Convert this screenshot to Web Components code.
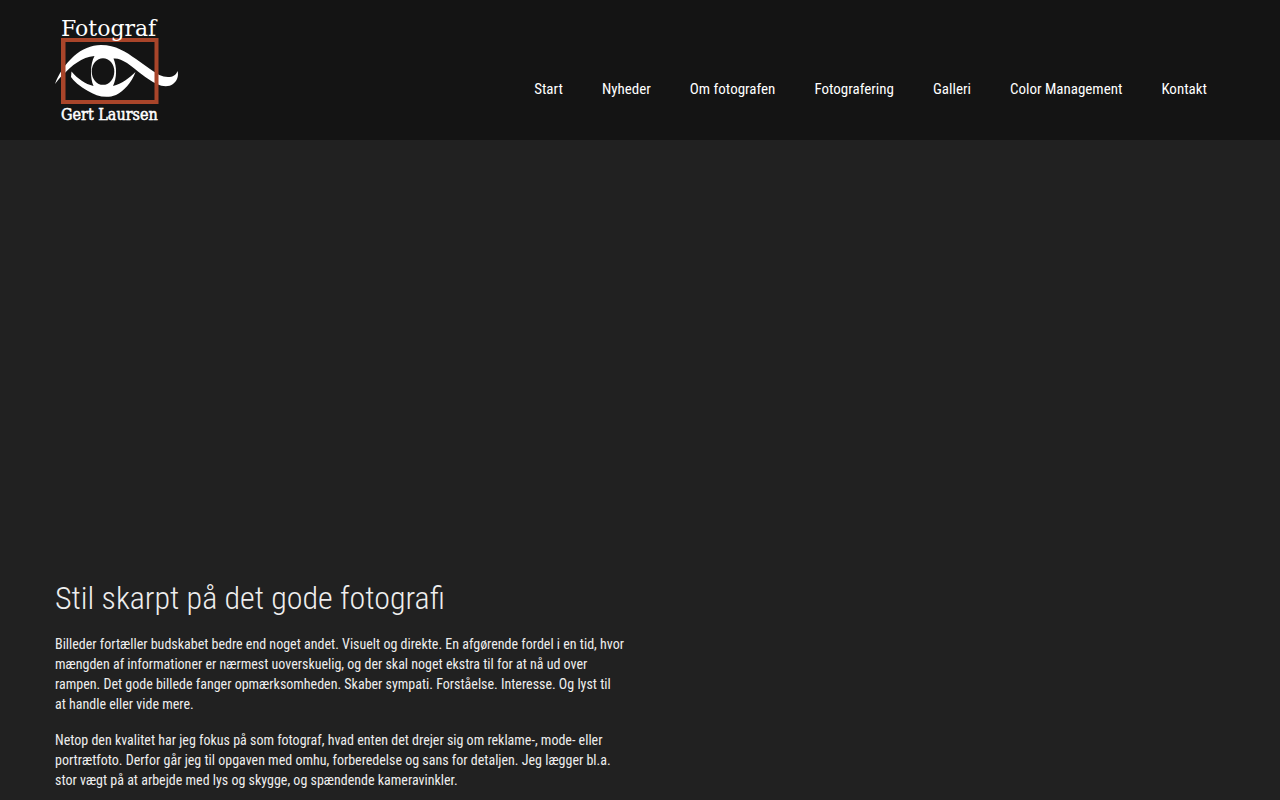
<!DOCTYPE html>
<html lang="da">
<head>
<meta charset="utf-8">
<meta name="viewport" content="width=device-width, initial-scale=1">
<title>Fotograf Gert Laursen</title>
<style>
  body { margin: 0; background: #212121; color: #eee; font-family: "Roboto Condensed", Roboto, sans-serif; }
</style>
</head>
<body>
<site-header>
  <site-logo slot="logo"></site-logo>
  <site-nav>
    <nav-link href="#start">Start</nav-link>
    <nav-link href="#nyheder">Nyheder</nav-link>
    <nav-link href="#om">Om fotografen</nav-link>
    <nav-link href="#fotografering">Fotografering</nav-link>
    <nav-link href="#galleri">Galleri</nav-link>
    <nav-link href="#color">Color Management</nav-link>
    <nav-link href="#kontakt">Kontakt</nav-link>
  </site-nav>
</site-header>
<main>
  <hero-stage></hero-stage>
  <intro-article>
    <span slot="title">Stil skarpt på det gode fotografi</span>
    <text-block>Billeder fortæller budskabet bedre end noget andet. Visuelt og direkte. En afgørende fordel i en tid, hvor mængden af informationer er nærmest uoverskuelig, og der skal noget ekstra til for at nå ud over rampen. Det gode billede fanger opmærksomheden. Skaber sympati. Forståelse. Interesse. Og lyst til at&nbsp;handle eller vide mere.</text-block>
    <text-block>Netop den kvalitet har jeg fokus på som fotograf, hvad enten det drejer sig om reklame-, mode- eller portrætfoto. Derfor går jeg til opgaven med omhu, forberedelse og sans for detaljen. Jeg lægger bl.a. stor vægt på at arbejde med lys og skygge, og spændende kameravinkler.</text-block>
  </intro-article>
</main>
<script>
  const define = (name, html) => customElements.define(name, class extends HTMLElement {
    constructor() {
      super();
      this.attachShadow({ mode: "open" }).innerHTML = html;
    }
  });

  define("site-header", `
    <style>
      :host { display: block; background: #141414; }
      header { display: flex; justify-content: space-between; align-items: center; max-width: 1170px; margin: 0 auto; min-height: 140px; box-sizing: border-box; }
      .nav { padding-top: 38px; padding-right: 18px; }
    </style>
    <header><slot name="logo"></slot><div class="nav"><slot></slot></div></header>`);

  define("site-nav", `
    <style>
      :host { display: block; }
      nav { display: flex; flex-wrap: wrap; column-gap: 39px; }
    </style>
    <nav aria-label="Hovedmenu"><slot></slot></nav>`);

  customElements.define("nav-link", class extends HTMLElement {
    constructor() {
      super();
      this.attachShadow({ mode: "open" }).innerHTML = `
        <style>
          :host { display: block; }
          a { color: #fff; font-size: 15px; line-height: 20px; text-decoration: none; white-space: nowrap; }
          a:hover { color: #a9452a; }
        </style>
        <a><slot></slot></a>`;
    }
    connectedCallback() {
      this.shadowRoot.querySelector("a").href = this.getAttribute("href");
    }
  });

  define("site-logo", `
    <style>
      :host { display: block; }
      a { display: block; }
      svg { display: block; overflow: visible; }
      text { fill: #fff; font-family: "DejaVu Serif", serif; }
      .name { font-family: "DejaVu Serif Condensed", "DejaVu Serif", serif; stroke: #fff; stroke-width: 0.5; }
    </style>
    <a href="#start" aria-label="Fotograf Gert Laursen">
      <svg width="124" height="104" viewBox="55 18 124 104">
        <path fill="#fff" d="M55 84C58 75 65 64 74 56C82 49 91 45 101 45C116 45 126 52 136 59L150 69C157 74 162 77 168 77C173 77 176 75 177.500 71C179 76 177 81 173 84C169 87 163 87 157 84C146 79 137 70 127 63C122 60 118 58 113.500 58.500C117 67 117 78 113 86C122 84 129 78 135.500 72C132 82 123 92 116 95C106 99 96 96 88 91C80 87 73 80 71 77L71.500 71.500C78 79 85 84 93.500 86C90 78 90 64 94.500 56C82 57 71 66 64 74C60 77 58 80 55 84Z"/>
        <ellipse cx="103" cy="71.500" rx="11.300" ry="13.300" fill="#141414"/>
        <path fill="#a9452a" fill-rule="evenodd" d="M61 38H158.500V104H61ZM65.500 42V100H154.500V42Z"/>
        <text x="61" y="36" font-size="22">Fotograf</text>
        <text class="name" x="61" y="120" font-size="16">Gert Laursen</text>
      </svg>
    </a>`);

  define("hero-stage", `
    <style>:host { display: block; height: 420px; }</style>`);

  define("intro-article", `
    <style>
      :host { display: block; max-width: 1170px; margin: 0 auto; }
      article { display: flex; flex-direction: column; gap: 16px; width: 50%; box-sizing: border-box; padding-right: 15px; }
      h1 { margin: 0; padding-top: 18px; font-size: 32px; line-height: 40px; font-weight: 300; }
    </style>
    <article><h1><slot name="title"></slot></h1><slot></slot></article>`);

  define("text-block", `
    <style>
      :host { display: block; }
      p { margin: 0; font-size: 14px; line-height: 20px; }
    </style>
    <p><slot></slot></p>`);
</script>
</body>
</html>
